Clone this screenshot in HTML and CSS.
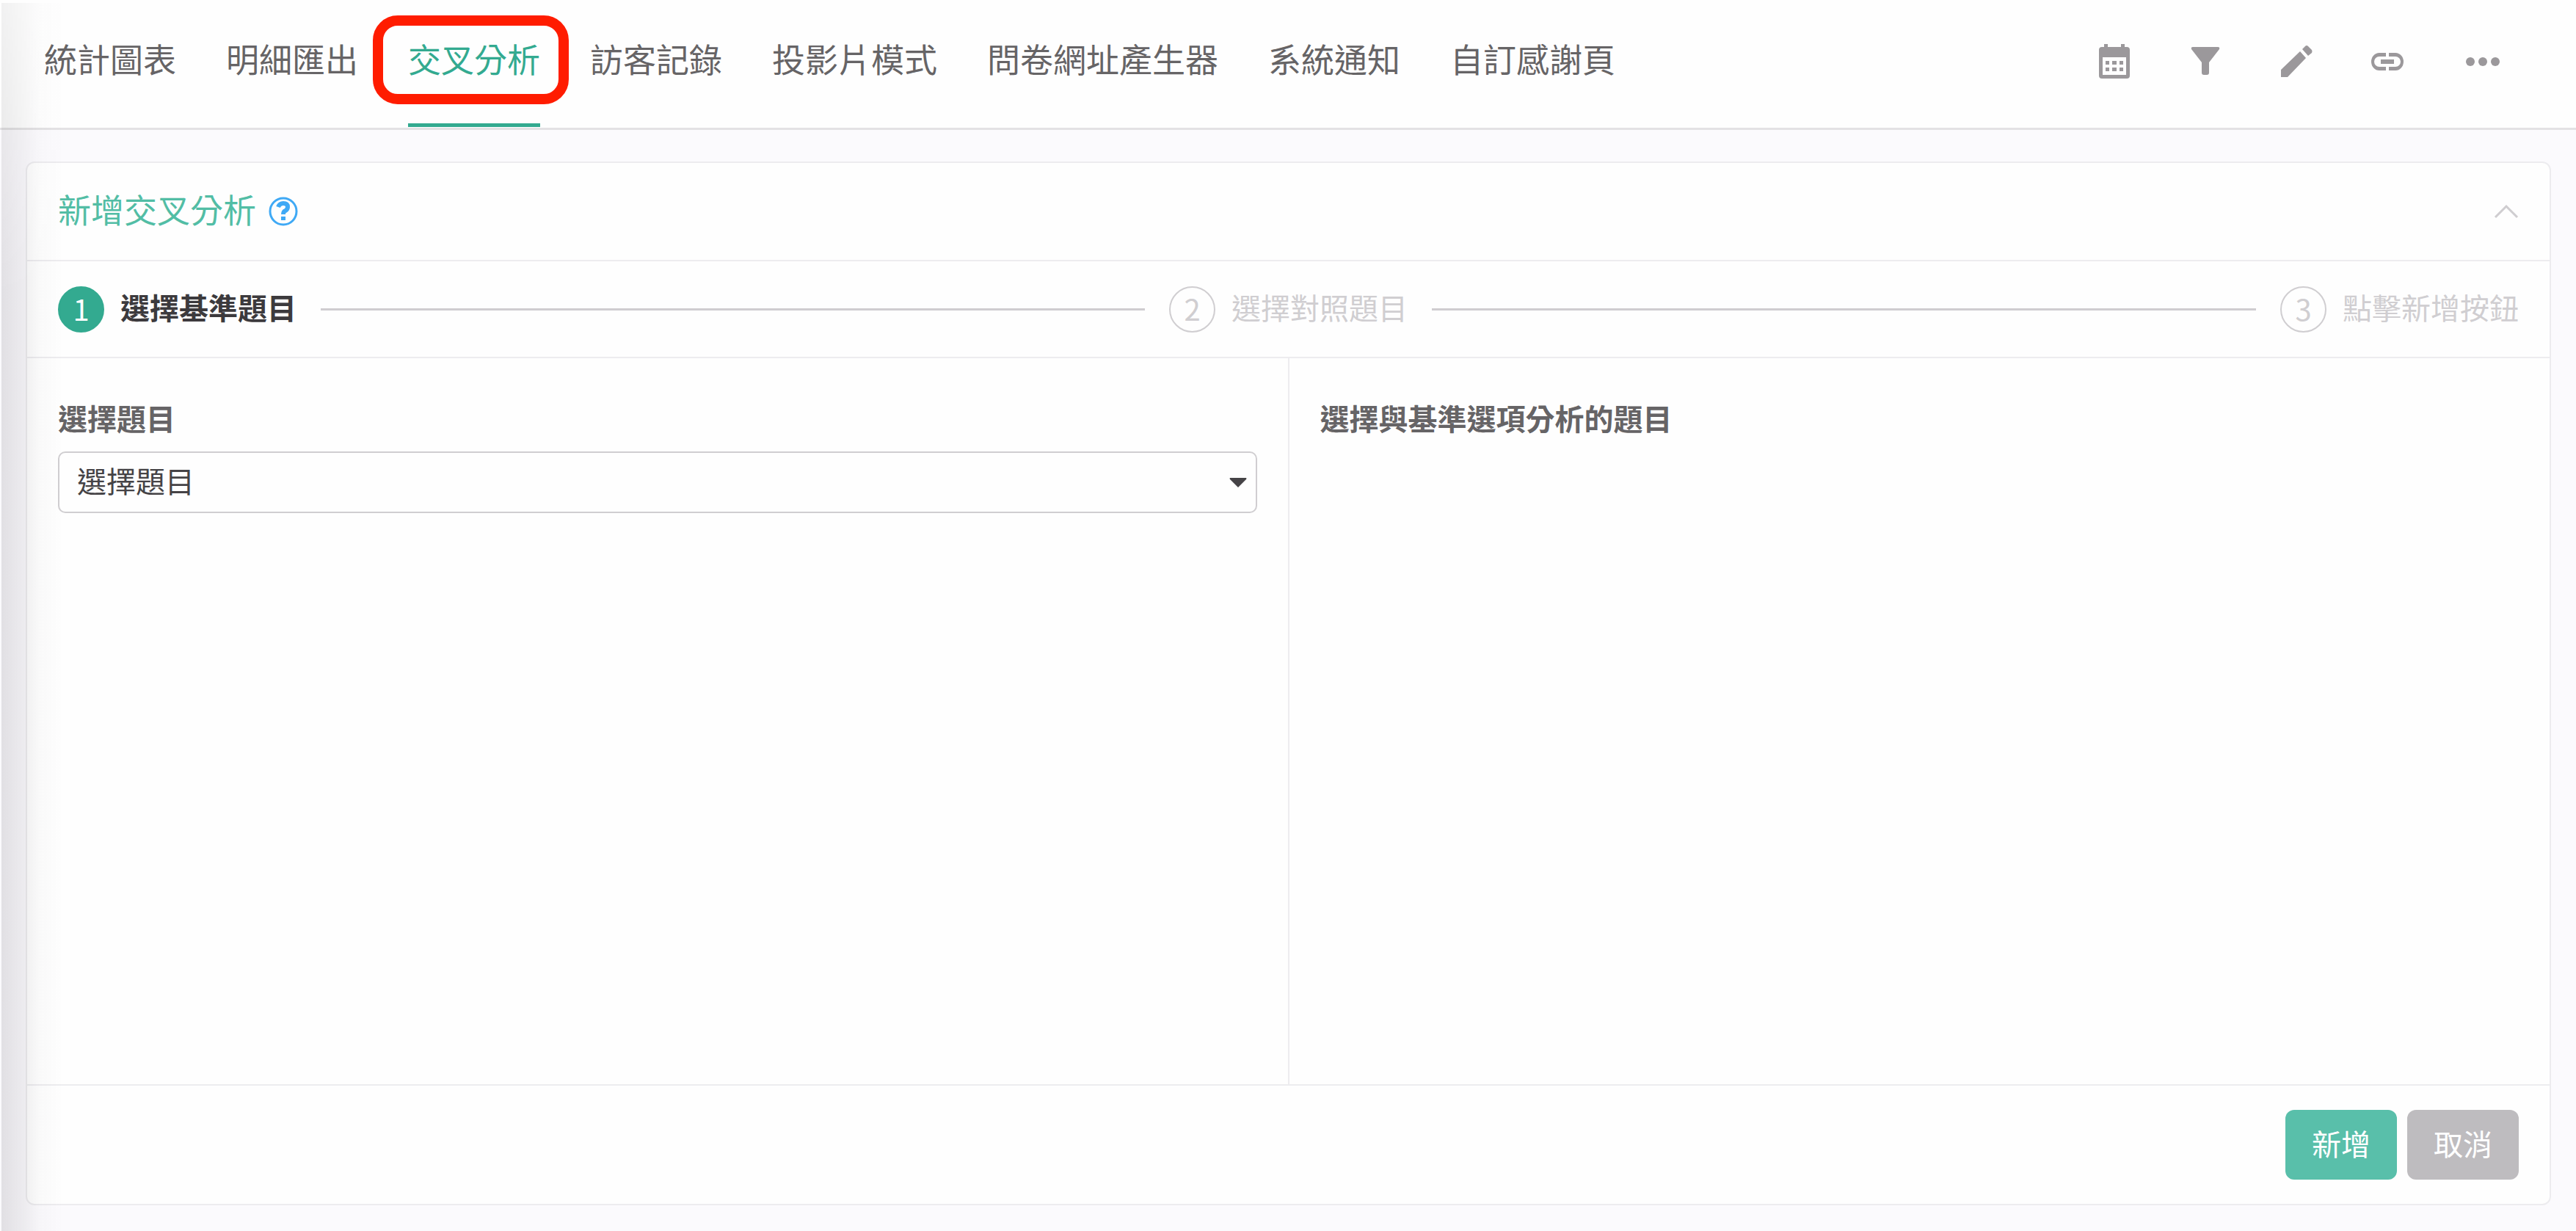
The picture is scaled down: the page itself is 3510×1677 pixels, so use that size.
FILE: index.html
```
<!DOCTYPE html>
<html lang="zh-Hant">
<head>
    <meta charset="UTF-8">
    <title>交叉分析</title>
    <link rel="stylesheet" href="styles.css">
</head>
<body>
    <header class="topbar">
        <nav class="tabs">
            <a href="#">統計圖表</a>
            <a href="#">明細匯出</a>
            <a href="#" class="active">交叉分析</a>
            <a href="#">訪客記錄</a>
            <a href="#">投影片模式</a>
            <a href="#">問卷網址產生器</a>
            <a href="#">系統通知</a>
            <a href="#">自訂感謝頁</a>
        </nav>
        <div class="tools">
            <button type="button" aria-label="日期">
                <svg width="48" height="48" viewBox="0 0 48 48">
                    <path fill-rule="evenodd" d="M10 0h5v4h18V0h5v4h3a4 4 0 0 1 4 4v35a4 4 0 0 1-4 4H7a4 4 0 0 1-4-4V8a4 4 0 0 1 4-4h3zM8 18v24h32V18z"/>
                    <path d="M12 23h5v5h-5zM21 23h6v5h-6zM31 23h5v5h-5zM12 32h5v5h-5zM21 32h6v5h-6zM31 32h5v5h-5z"/>
                </svg>
            </button>
            <button type="button" aria-label="篩選">
                <svg width="48" height="48" viewBox="0 0 48 48">
                    <path d="M7 4h34q3 0 2 3L29 25v14q0 3-3 3h-4q-3 0-3-3V25L5 7q-1-3 2-3z"/>
                </svg>
            </button>
            <button type="button" aria-label="編輯">
                <svg width="48" height="48" viewBox="0 0 48 48">
                    <path d="M3 35L29 10l8 9-25 26H3zM32 7l4-4q2-2 4 0l5 5q1 2 0 4l-5 4z"/>
                </svg>
            </button>
            <button type="button" aria-label="連結">
                <svg width="48" height="48" viewBox="0 0 48 48">
                    <path d="M22 12h-9a11 12 0 0 0 0 24h9v-5h-9a7 7 0 0 1 0-14h9zM26 12h9a11 12 0 0 1 0 24h-9v-5h9a7 7 0 0 0 0-14h-9zM15 21h18v6H15z"/>
                </svg>
            </button>
            <button type="button" class="more" aria-label="更多">
                <svg width="60" height="48" viewBox="0 0 60 48">
                    <circle cx="13" cy="24" r="6"/>
                    <circle cx="30" cy="24" r="6"/>
                    <circle cx="47" cy="24" r="6"/>
                </svg>
            </button>
        </div>
    </header>

    <main class="main">
        <section class="card">
            <div class="card-header">
                <h1>新增交叉分析</h1>
                <button type="button" class="help" aria-label="說明">
                    <svg width="40" height="40" viewBox="0 0 40 40" fill="none" stroke="#3fa9f5">
                        <circle cx="20" cy="20" r="18" stroke-width="3"/>
                        <path d="M13 14q2-5 7-5 6 0 6 5 0 3-3 5-3 1-3 5" stroke-width="6"/>
                        <path d="M20 27v5" stroke-width="6"/>
                    </svg>
                </button>
                <button type="button" class="collapse" aria-label="收合">
                    <svg width="34" height="20" viewBox="0 0 34 20" fill="none" stroke="#cfcdd0" stroke-width="3">
                        <path d="M2 18L17 3l15 15"/>
                    </svg>
                </button>
            </div>

            <ol class="steps">
                <li class="step current"><span class="num">1</span><span class="name">選擇基準題目</span></li>
                <li class="line"></li>
                <li class="step"><span class="num">2</span><span class="name">選擇對照題目</span></li>
                <li class="line"></li>
                <li class="step"><span class="num">3</span><span class="name">點擊新增按鈕</span></li>
            </ol>

            <div class="columns">
                <div class="column">
                    <label for="question">選擇題目</label>
                    <div class="select">
                        <select id="question">
                            <option>選擇題目</option>
                        </select>
                        <svg class="arrow" width="24" height="13" viewBox="0 0 24 13">
                            <path d="M1 0h22q1 1 0 2L12 13 1 2q-1-1 0-2z"/>
                        </svg>
                    </div>
                </div>
                <div class="column">
                    <h2>選擇與基準選項分析的題目</h2>
                </div>
            </div>

            <div class="card-footer">
                <button type="button" class="btn btn-add">新增</button>
                <button type="button" class="btn btn-cancel">取消</button>
            </div>
        </section>
    </main>
</body>
</html>
```
FILE: styles.css
```
*,
*::before,
*::after{
    margin: 0;
    padding: 0;
    box-sizing: border-box;
}
body{
    min-height: 100vh;
    display: flex;
    flex-direction: column;
    background-color: #fbfafd;
    color: #666466;
    font-family: "Noto Sans CJK TC", sans-serif;
    font-size: 40px;
    line-height: 60px;
    position: relative;
}
/* 左側選單的陰影 */
body::before{
    content: "";
    position: absolute;
    top: 4px;
    bottom: 0;
    left: 2px;
    width: 84px;
    background: linear-gradient(to right, rgba(20,15,25,.11), rgba(20,15,25,.06) 32px, rgba(20,15,25,.02) 52px, transparent);
    -webkit-mask-image: linear-gradient(rgba(0,0,0,.5), #000 400px);
    mask-image: linear-gradient(rgba(0,0,0,.5), #000 400px);
    pointer-events: none;
    z-index: 1;
}
button{
    border: none;
    background: none;
    font: inherit;
    cursor: pointer;
}
svg{
    display: block;
}
.topbar{
    display: flex;
    justify-content: space-between;
    align-items: flex-start;
    height: 177px;
    padding: 0 97px 0 60px;
    background-color: #fefefe;
    border-bottom: 3px solid #e3e2e4;
}
.tabs{
    display: flex;
    gap: 68px;
}
.tabs a{
    position: relative;
    padding: 50px 0 58px;
    border-bottom: 5px solid transparent;
    color: #666466;
    font-size: 45px;
    text-decoration: none;
    white-space: nowrap;
}
.tabs .active{
    color: #33aa90;
    border-bottom-color: #33aa90;
}
.tabs .active::after{
    content: "";
    position: absolute;
    top: 21px;
    left: -48px;
    right: -39px;
    height: 121px;
    border: 14px solid #ff1c00;
    border-radius: 34px;
}
.tools{
    display: flex;
    gap: 76px;
    padding-top: 60px;
}
.tools svg{
    fill: #9b989b;
}
.main{
    flex: 1;
    display: flex;
    padding: 43px 34px 35px 35px;
}
.card{
    flex: 1;
    display: flex;
    flex-direction: column;
    background-color: #fefefe;
    border: 2px solid #edecef;
    border-radius: 12px;
}
.card-header{
    display: flex;
    align-items: center;
    height: 134px;
    padding: 0 42px;
    border-bottom: 2px solid #edecef;
}
.card-header h1{
    padding-bottom: 6px;
    color: #52bda5;
    font-size: 45px;
    font-weight: normal;
}
.help{
    margin-left: 17px;
}
.collapse{
    margin-left: auto;
}
.steps{
    display: flex;
    align-items: center;
    gap: 33px;
    height: 132px;
    padding: 0 42px;
    border-bottom: 2px solid #edecef;
    list-style: none;
}
.step{
    display: flex;
    align-items: center;
    gap: 22px;
    color: #d0ced1;
    white-space: nowrap;
}
.num{
    width: 63px;
    height: 63px;
    border: 2px solid #d0ced1;
    border-radius: 50%;
    line-height: 56px;
    text-align: center;
}
.name{
    padding-bottom: 6px;
}
.current .name{
    color: #3c3a3d;
    font-weight: bold;
}
.current .num{
    background-color: #33aa90;
    border-color: #33aa90;
    color: #fff;
}
.line{
    flex: 1;
    height: 3px;
    background-color: #cfcdd0;
}
.columns{
    flex: 1;
    display: flex;
}
.column{
    flex: 1;
    padding: 51px 42px;
}
.column + .column{
    border-left: 2px solid #edecef;
}
.column label,
.column h2{
    display: block;
    font-size: 40px;
    font-weight: bold;
}
.select{
    position: relative;
    margin-top: 16px;
}
.select select{
    -webkit-appearance: none;
    appearance: none;
    display: block;
    width: 100%;
    height: 84px;
    padding: 0 60px 6px 24px;
    border: 2px solid #d0ced1;
    border-radius: 10px;
    background-color: #fefefe;
    color: #454346;
    font: inherit;
}
.arrow{
    position: absolute;
    top: 36px;
    right: 14px;
    fill: #454346;
    pointer-events: none;
}
.card-footer{
    display: flex;
    justify-content: flex-end;
    gap: 14px;
    padding: 33px 42px;
    border-top: 2px solid #edecef;
}
.btn{
    height: 95px;
    padding: 0 36px 6px;
    border-radius: 12px;
    color: #fff;
}
.btn-add{
    background-color: #59bfaa;
}
.btn-cancel{
    background-color: #bebcbf;
}
```
